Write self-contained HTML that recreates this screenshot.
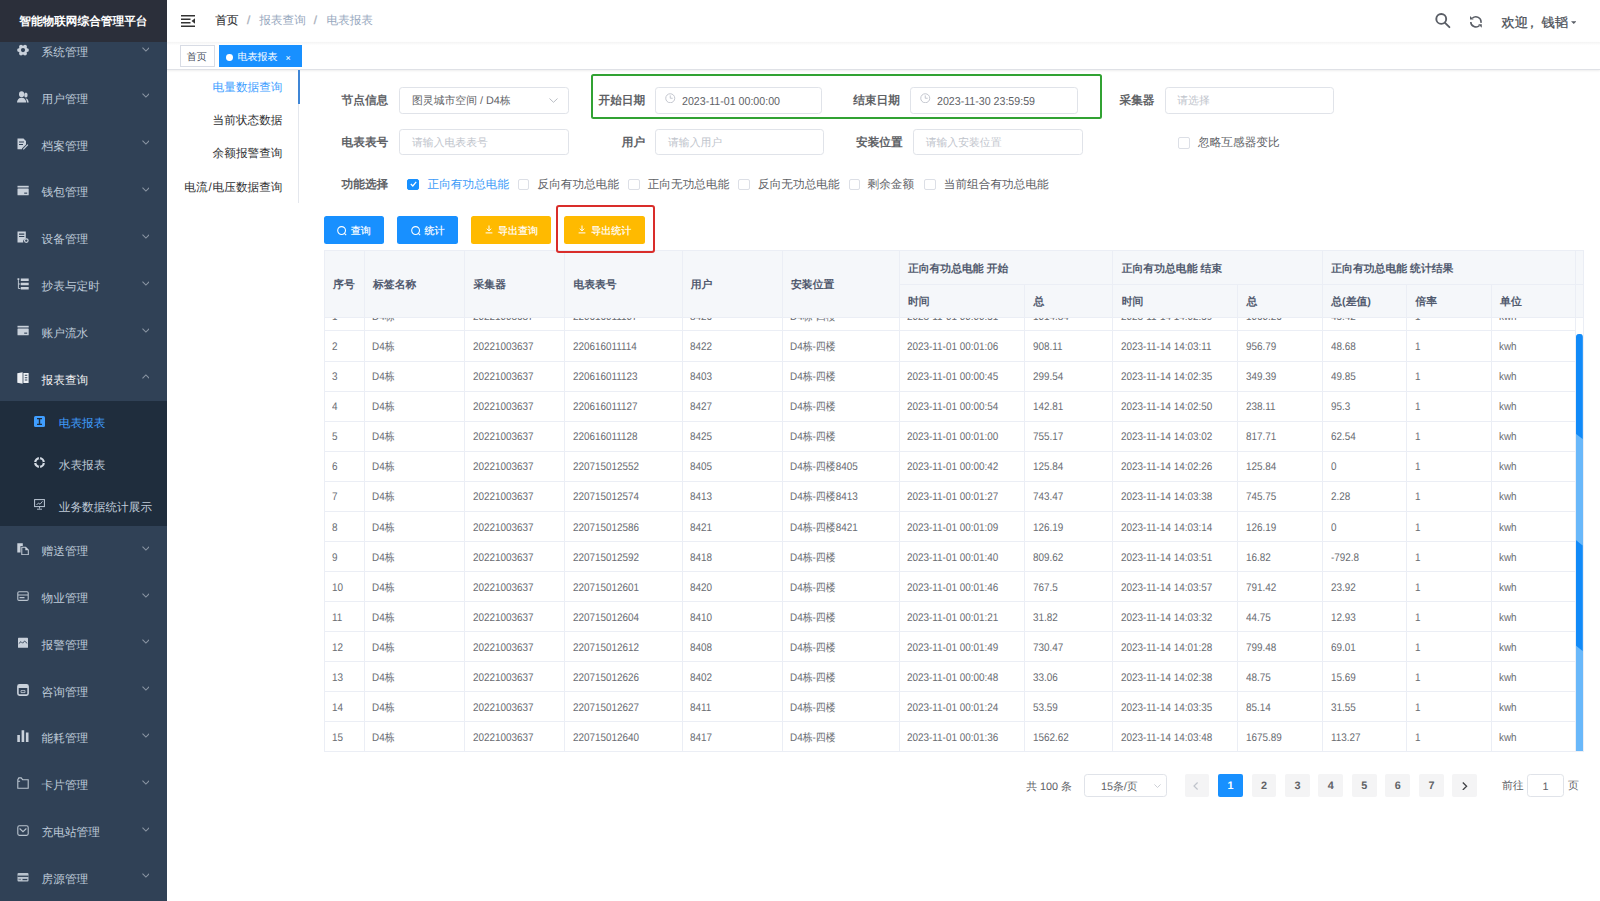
<!DOCTYPE html><html><head><meta charset="utf-8"><style>
*{box-sizing:border-box;margin:0;padding:0}
html,body{width:1600px;height:901px;overflow:hidden;background:#fff}
body{font-family:"Liberation Sans",sans-serif;color:#606266;position:relative;text-rendering:geometricPrecision}
.a{position:absolute;white-space:nowrap}
.sb{position:absolute;left:0;top:0;width:166.67px;height:901px;background:#304156;overflow:hidden}
.logo{position:absolute;left:0;top:0;width:166.67px;height:41.67px;background:#2b2f3a;color:#fff;font-weight:bold;font-size:11.67px;line-height:44.6px;text-align:center;z-index:2}
.mi{position:absolute;left:0;width:166.67px;height:46.67px;color:#bfcbd9;font-size:11.67px;line-height:46.67px}
.mi .t{position:absolute;left:41.6px;top:3.3px}
.mi svg.ic{position:absolute;left:16.5px;width:12px;height:12px}
.mi .ar{position:absolute;left:141.7px;width:7.8px;height:5px}
.sub{position:absolute;left:0;top:400.8px;width:166.67px;height:125px;background:#1f2d3d}
.si{position:absolute;left:0;width:166.67px;height:41.67px;line-height:41.67px;color:#bfcbd9;font-size:11.67px}
.si .t{position:absolute;left:58.8px;top:2.4px}
.si svg.ic{position:absolute;left:33.5px;width:11px;height:11px}
.nav{position:absolute;left:166.67px;top:0;width:1433.33px;height:41.67px;background:#fff}
.tags{position:absolute;left:166.67px;top:41.67px;width:1433.33px;height:28.33px;background:linear-gradient(#f4f4f4 0,#fbfbfb 2px,#fff 3.5px,#fff 100%);border-bottom:1px solid #dfe1e6;box-shadow:0 1px 2px 0 rgba(0,0,0,.07)}
.tag{position:absolute;top:3.7px;height:21.3px;line-height:20px;font-size:10px;border:1px solid #d8dce5;color:#495060;background:#fff}
.inp{position:absolute;height:26.2px;border:1px solid #e0e3e9;border-radius:3.3px;background:#fff;font-size:10.83px;line-height:24px;color:#606266}
.ph{color:#c0c4cc}
.lbl{position:absolute;font-size:11.67px;font-weight:bold;color:#606266;line-height:20px;text-align:right}
.cb{position:absolute;width:11.67px;height:11.67px;border:1px solid #dcdfe6;border-radius:2px;background:#fff}
.cbt{position:absolute;font-size:11.67px;color:#606266;line-height:14px;margin-top:0.8px}
.btn{position:absolute;top:216px;height:27.8px;border-radius:2.5px;color:#fff;font-size:10px;line-height:32px;-webkit-text-stroke:0.2px #fff}
.tbl{position:absolute;left:323.9px;top:250.3px;width:1258.9px;height:501.5px;overflow:hidden;border:1px solid #ebeef5;border-right:0}
.th{position:absolute;background:#f5f7fa;border-right:1px solid #ebeef5;border-bottom:1px solid #ebeef5;font-size:10.83px;font-weight:bold;color:#515a6e}
.th span{position:absolute;left:8.2px;top:50%;line-height:14px;margin-top:-6px}
.th.r1 span{margin-top:-5.3px}
.td{position:absolute;border-right:1px solid #ebeef5;border-bottom:1px solid #ebeef5;font-size:10px;color:#696c72;background:#fff}
.td span{position:absolute;left:7.5px;top:8.7px;line-height:14px;font-size:11px;transform:scaleX(0.9);transform-origin:0 0}
.pg{position:absolute;top:774.4px;height:22.9px;line-height:25.9px;font-size:10.83px;font-weight:bold;color:#606266;background:#f4f4f5;border-radius:2px;text-align:center;width:24.8px}
</style></head><body><div class="sb">
<div class="logo">智能物联网综合管理平台</div>
<div class="mi" style="top:26.70px;color:#bfcbd9"><svg class="ic" viewBox="0 0 12 12" style="top:17.40px"><circle cx="10.00" cy="6.10" r="1.9" fill="#c9d1db"/><circle cx="8.00" cy="9.56" r="1.9" fill="#c9d1db"/><circle cx="4.00" cy="9.56" r="1.9" fill="#c9d1db"/><circle cx="2.00" cy="6.10" r="1.9" fill="#c9d1db"/><circle cx="4.00" cy="2.64" r="1.9" fill="#c9d1db"/><circle cx="8.00" cy="2.64" r="1.9" fill="#c9d1db"/><circle cx="6" cy="6.1" r="4.3" fill="#c9d1db"/><circle cx="6" cy="6.1" r="2.1" fill="#304156"/></svg><span class="t">系统管理</span><svg class="ar" viewBox="0 0 8 5" style="top:19.9px"><path d="M0.5 0.6 L4 4.1 L7.5 0.6" fill="none" stroke="#8a95a3" stroke-width="1.1"/></svg></div>
<div class="mi" style="top:73.52px;color:#bfcbd9"><svg class="ic" viewBox="0 0 12 12" style="top:17.30px"><ellipse cx="4.6" cy="3.2" rx="2.6" ry="3" fill="#c9d1db"/><path fill="#c9d1db" d="M0 11.6c0-2.8 1.6-4.9 4.6-4.9s4.6 2.1 4.6 4.9z"/><ellipse cx="8.9" cy="4" rx="1.7" ry="2.5" fill="#c9d1db"/><path fill="#c9d1db" d="M8.6 7.3c1.9 0.3 2.9 1.9 3.1 4.3h-1.7c-0.1-1.6-0.6-3.1-1.4-4.3z"/></svg><span class="t">用户管理</span><svg class="ar" viewBox="0 0 8 5" style="top:19.9px"><path d="M0.5 0.6 L4 4.1 L7.5 0.6" fill="none" stroke="#8a95a3" stroke-width="1.1"/></svg></div>
<div class="mi" style="top:120.34px;color:#bfcbd9"><svg class="ic" viewBox="0 0 12 12" style="top:17.20px"><path fill="#c9d1db" d="M0.5 0.5h6l2.5 2.5v3.5L5 10.5v0.8H0.5z"/><path fill="#304156" d="M2 3.6h5v1H2zM2 6h4v1H2z"/><path stroke="#c9d1db" stroke-width="1.2" d="M6.3 11.3l4.6-4.6"/></svg><span class="t">档案管理</span><svg class="ar" viewBox="0 0 8 5" style="top:19.9px"><path d="M0.5 0.6 L4 4.1 L7.5 0.6" fill="none" stroke="#8a95a3" stroke-width="1.1"/></svg></div>
<div class="mi" style="top:167.16px;color:#bfcbd9"><svg class="ic" viewBox="0 0 12 12" style="top:17.40px"><rect x="0.5" y="0.8" width="11.2" height="1.7" fill="#c9d1db"/><rect x="0.5" y="3.6" width="11.2" height="6.6" rx="0.5" fill="#c9d1db"/><rect x="7.2" y="7.6" width="3" height="1.1" fill="#304156"/></svg><span class="t">钱包管理</span><svg class="ar" viewBox="0 0 8 5" style="top:19.9px"><path d="M0.5 0.6 L4 4.1 L7.5 0.6" fill="none" stroke="#8a95a3" stroke-width="1.1"/></svg></div>
<div class="mi" style="top:213.98px;color:#bfcbd9"><svg class="ic" viewBox="0 0 12 12" style="top:16.80px"><path fill="#c9d1db" d="M0.5 0.5h8.3v7.2a2.8 2.8 0 0 0-2.5 3.8H0.5z"/><path fill="#304156" d="M2 2.6h5.3v1.1H2zM2 5h5.3v1.1H2z"/><circle cx="9.3" cy="9.6" r="1.8" fill="none" stroke="#c9d1db" stroke-width="1.2"/></svg><span class="t">设备管理</span><svg class="ar" viewBox="0 0 8 5" style="top:19.9px"><path d="M0.5 0.6 L4 4.1 L7.5 0.6" fill="none" stroke="#8a95a3" stroke-width="1.1"/></svg></div>
<div class="mi" style="top:260.80px;color:#bfcbd9"><svg class="ic" viewBox="0 0 12 12" style="top:16.90px"><path fill="#c9d1db" d="M0.5 0.3h1.8v1.8H0.5zM3.8 0.5h7.9v2.4H3.8zM3.8 4.8h7.9v2.4H3.8zM3.8 9h7.9v2.4H3.8z"/><path fill="none" stroke="#c9d1db" stroke-width="0.9" d="M1.4 2.1v8.4h2M1.4 6h2"/></svg><span class="t">抄表与定时</span><svg class="ar" viewBox="0 0 8 5" style="top:19.9px"><path d="M0.5 0.6 L4 4.1 L7.5 0.6" fill="none" stroke="#8a95a3" stroke-width="1.1"/></svg></div>
<div class="mi" style="top:307.62px;color:#bfcbd9"><svg class="ic" viewBox="0 0 12 12" style="top:17.40px"><rect x="0.5" y="0.8" width="11.2" height="1.7" fill="#c9d1db"/><rect x="0.5" y="3.6" width="11.2" height="6.6" rx="0.5" fill="#c9d1db"/><rect x="7.2" y="7.6" width="3" height="1.1" fill="#304156"/></svg><span class="t">账户流水</span><svg class="ar" viewBox="0 0 8 5" style="top:19.9px"><path d="M0.5 0.6 L4 4.1 L7.5 0.6" fill="none" stroke="#8a95a3" stroke-width="1.1"/></svg></div>
<div class="mi" style="top:354.44px;color:#f4f4f5"><svg class="ic" viewBox="0 0 12 12" style="top:17.40px"><path fill="#edf0f4" d="M0.3 1.2L5.6 0.2v11.5L0.3 10.8z"/><path fill="#edf0f4" d="M6.4 1h5.2v10H6.4z"/><path fill="#304156" d="M7.8 2.8h2.5v1H7.8zM7.8 5.2h2.5v1H7.8zM7.8 7.6h2.5v1H7.8z"/></svg><span class="t">报表查询</span><svg class="ar" viewBox="0 0 8 5" style="top:19.9px"><path d="M0.5 4.4 L4 0.9 L7.5 4.4" fill="none" stroke="#8a95a3" stroke-width="1.1"/></svg></div>
<div class="sub">
<div class="si" style="top:0.00px;color:#409eff"><svg class="ic" viewBox="0 0 11 11" style="top:15px"><rect x="0" y="0" width="11" height="11" rx="1.5" fill="#409eff"/><path fill="#1f2d3d" d="M3 2h5v1.3H6.2v4.4H8V9H3V7.7h1.8V3.3H3z"/></svg><span class="t">电表报表</span></div>
<div class="si" style="top:41.67px;color:#bfcbd9"><svg class="ic" viewBox="0 0 11 11" style="top:15px"><circle cx="5.5" cy="5.5" r="4.3" fill="none" stroke="#d5dce5" stroke-width="2.2"/><path stroke="#1f2d3d" stroke-width="1.2" d="M5.5 0v2.5M5.5 8.5V11M0 5.5h2.5M8.5 5.5H11"/></svg><span class="t">水表报表</span></div>
<div class="si" style="top:83.33px;color:#bfcbd9"><svg class="ic" viewBox="0 0 11 11" style="top:15px"><rect x="0.6" y="0.6" width="9.8" height="7" fill="none" stroke="#bfcbd9" stroke-width="1"/><path fill="none" stroke="#bfcbd9" stroke-width="0.9" d="M2.5 6l2-2 1.5 1.3 2.5-3M5.5 7.6v2M3 10.2h5"/></svg><span class="t">业务数据统计展示</span></div>
</div>
<div class="mi" style="top:525.80px"><svg class="ic" viewBox="0 0 12 12" style="top:16.90px"><path fill="#c9d1db" d="M0.3 0.3h5.5v2.8H3.5v6.5H0.3z"/><path fill="#c9d1db" d="M4.3 3.8h4.5l3 3v5.5H4.3z"/><path fill="#304156" d="M5.3 4.8h3v2.5h2.5v4H5.3z"/><path fill="#c9d1db" d="M6 6h1.6v2.3h2.4v2.2H6z" opacity="0.0"/></svg><span class="t">赠送管理</span><svg class="ar" viewBox="0 0 8 5" style="top:19.9px"><path d="M0.5 0.6 L4 4.1 L7.5 0.6" fill="none" stroke="#8a95a3" stroke-width="1.1"/></svg></div>
<div class="mi" style="top:572.62px"><svg class="ic" viewBox="0 0 12 12" style="top:18.60px"><rect x="0.8" y="0.8" width="10.4" height="8.6" rx="1.2" fill="none" stroke="#b9c3ce" stroke-width="1.1"/><path stroke="#b9c3ce" stroke-width="1.1" d="M1 4h10M2.5 6.6h5"/></svg><span class="t">物业管理</span><svg class="ar" viewBox="0 0 8 5" style="top:19.9px"><path d="M0.5 0.6 L4 4.1 L7.5 0.6" fill="none" stroke="#8a95a3" stroke-width="1.1"/></svg></div>
<div class="mi" style="top:619.44px"><svg class="ic" viewBox="0 0 12 12" style="top:17.50px"><rect x="1" y="0.8" width="10" height="10" rx="0.6" fill="#c9d1db"/><path fill="none" stroke="#304156" stroke-width="0.9" d="M1.8 6.6l2.2-2 1.6 1.6 2-2.2 2.6 2.4"/></svg><span class="t">报警管理</span><svg class="ar" viewBox="0 0 8 5" style="top:19.9px"><path d="M0.5 0.6 L4 4.1 L7.5 0.6" fill="none" stroke="#8a95a3" stroke-width="1.1"/></svg></div>
<div class="mi" style="top:666.26px"><svg class="ic" viewBox="0 0 12 12" style="top:17.30px"><rect x="0.9" y="0.9" width="10.2" height="10.2" rx="1.6" fill="none" stroke="#c9d1db" stroke-width="1.6"/><rect x="1" y="1" width="10" height="3" fill="#c9d1db"/><path fill="none" stroke="#c9d1db" stroke-width="0.8" d="M4 6.6h4v2H4z"/></svg><span class="t">咨询管理</span><svg class="ar" viewBox="0 0 8 5" style="top:19.9px"><path d="M0.5 0.6 L4 4.1 L7.5 0.6" fill="none" stroke="#8a95a3" stroke-width="1.1"/></svg></div>
<div class="mi" style="top:713.08px"><svg class="ic" viewBox="0 0 12 12" style="top:16.90px"><path fill="#c9d1db" d="M0.3 5h2.6v7H0.3zM4.6 0.3h2.6V12H4.6zM8.9 2.5h2.6V12H8.9z"/></svg><span class="t">能耗管理</span><svg class="ar" viewBox="0 0 8 5" style="top:19.9px"><path d="M0.5 0.6 L4 4.1 L7.5 0.6" fill="none" stroke="#8a95a3" stroke-width="1.1"/></svg></div>
<div class="mi" style="top:759.90px"><svg class="ic" viewBox="0 0 12 12" style="top:17.40px"><path fill="none" stroke="#b9c3ce" stroke-width="1.1" d="M0.8 2.7v8.5h10.4V2.7H5.6L4.2 0.9H1.8zM0.8 4.2h2.3"/></svg><span class="t">卡片管理</span><svg class="ar" viewBox="0 0 8 5" style="top:19.9px"><path d="M0.5 0.6 L4 4.1 L7.5 0.6" fill="none" stroke="#8a95a3" stroke-width="1.1"/></svg></div>
<div class="mi" style="top:806.72px"><svg class="ic" viewBox="0 0 12 12" style="top:17.80px"><rect x="0.8" y="0.8" width="10.4" height="9.6" rx="1.6" fill="none" stroke="#b9c3ce" stroke-width="1.1"/><path fill="none" stroke="#b9c3ce" stroke-width="1.1" d="M2.6 3.5l3.4 3.2 3.4-3.2"/></svg><span class="t">充电站管理</span><svg class="ar" viewBox="0 0 8 5" style="top:19.9px"><path d="M0.5 0.6 L4 4.1 L7.5 0.6" fill="none" stroke="#8a95a3" stroke-width="1.1"/></svg></div>
<div class="mi" style="top:853.54px"><svg class="ic" viewBox="0 0 12 12" style="top:18.30px"><rect x="0.5" y="1" width="11" height="8.5" rx="1" fill="#b9c3ce"/><rect x="0.5" y="3.6" width="11" height="1.3" fill="#304156"/><rect x="5.5" y="6.9" width="4.8" height="1.3" fill="#304156"/><rect x="1.5" y="6.9" width="2.5" height="0.6" fill="#304156"/></svg><span class="t">房源管理</span><svg class="ar" viewBox="0 0 8 5" style="top:19.9px"><path d="M0.5 0.6 L4 4.1 L7.5 0.6" fill="none" stroke="#8a95a3" stroke-width="1.1"/></svg></div>
</div>
<div class="nav"></div>
<svg class="a" style="left:181px;top:15px;width:14px;height:12px" viewBox="0 0 14 12"><path fill="#333" d="M0 0h14v1.4H0zM0 3.5h9.5v1.4H0zM0 7h9.5v1.4H0zM0 10.6h14V12H0z"/><path fill="#333" d="M14 3.3v5.4L10.5 6z"/></svg>
<span class="a" style="left:215.2px;top:14.2px;font-size:11.67px;line-height:14px;color:#303133;-webkit-text-stroke:0.15px #303133">首页</span>
<span class="a" style="left:247px;top:14.4px;font-size:11.67px;line-height:14px;color:#a9b0bb;-webkit-text-stroke:0.3px #a9b0bb">/</span>
<span class="a" style="left:259.2px;top:14.2px;font-size:11.67px;line-height:14px;color:#97a8be">报表查询</span>
<span class="a" style="left:313.7px;top:14.4px;font-size:11.67px;line-height:14px;color:#a9b0bb;-webkit-text-stroke:0.3px #a9b0bb">/</span>
<span class="a" style="left:326.4px;top:14.2px;font-size:11.67px;line-height:14px;color:#97a8be">电表报表</span>
<svg class="a" style="left:1434px;top:12px;width:17px;height:17px" viewBox="0 0 17 17"><circle cx="7.25" cy="6.9" r="4.95" fill="none" stroke="#5a5e66" stroke-width="1.9"/><path stroke="#5a5e66" stroke-width="1.9" stroke-linecap="round" d="M10.8 10.6l4.6 4.6"/></svg>
<svg class="a" style="left:1469px;top:15px;width:14px;height:14px" viewBox="0 0 14 14"><path fill="none" stroke="#5a5e66" stroke-width="1.6" d="M3.3 3.3A5.1 5.1 0 0 1 11.92 7.79M1.8 6.9A5.1 5.1 0 0 0 10.5 10.5"/><path fill="#5a5e66" d="M1 1L1 4.6L4.6 4.6ZM9.2 9.2L12.8 9.2L12.8 12.8Z"/></svg>
<span class="a" style="left:1501.5px;top:15px;font-size:13.33px;line-height:16px;color:#4a4e56;-webkit-text-stroke:0.25px #4a4e56">欢迎<span style="margin-left:-3px;margin-right:3px">，</span>钱韬</span>
<svg class="a" style="left:1570.5px;top:21px;width:5.5px;height:3px" viewBox="0 0 6 3"><path fill="#5a5e66" d="M0 0h6L3 3z"/></svg>
<div class="tags"></div>
<div class="tag" style="left:180px;top:45.3px;width:34.7px;padding-left:5.8px;line-height:23.6px">首页</div>
<div class="tag" style="left:219px;top:45.3px;width:82.5px;background:#1890ff;border-color:#1890ff;color:#fff;padding-left:17.5px;line-height:24px">电表报表<span style="position:absolute;left:6.2px;top:7.9px;width:6.8px;height:6.8px;border-radius:50%;background:#fff"></span><span style="position:absolute;left:65.5px;top:0.7px;font-size:9px;line-height:23px">×</span></div>
<div class="a" style="left:297.5px;top:70px;width:1.5px;height:133.3px;background:#e4e7ed"></div>
<div class="a" style="left:297.6px;top:69.8px;width:2px;height:33.8px;background:#3f86d6"></div>
<div class="a" style="right:1317.50px;top:79.70px;font-size:11.67px;line-height:16px;color:#409eff">电量数据查询</div>
<div class="a" style="right:1317.50px;top:113.03px;font-size:11.67px;line-height:16px;color:#303133">当前状态数据</div>
<div class="a" style="right:1317.50px;top:146.36px;font-size:11.67px;line-height:16px;color:#303133">余额报警查询</div>
<div class="a" style="right:1317.50px;top:179.69px;font-size:11.67px;line-height:16px;color:#303133">电流<span style="margin:0 0.9px">/</span>电压数据查询</div>
<div class="lbl" style="right:1211.80px;top:91.40px">节点信息</div>
<div class="inp" style="left:399.40px;top:87.30px;width:169.40px;height:26.30px"><span class="a " style="left:11.6px;top:1px">图灵城市空间 / D4栋</span></div>
<svg class="a" style="left:549px;top:97.5px;width:9px;height:5px" viewBox="0 0 9 5"><path d="M0.5 0.5L4.5 4.3 8.5 0.5" fill="none" stroke="#b8bcc4" stroke-width="1"/></svg>
<div class="a" style="left:590.6px;top:74.3px;width:511.4px;height:45px;border:2.5px solid #31a233;border-radius:2.5px"></div>
<div class="lbl" style="right:954.90px;top:91.10px">开始日期</div>
<div class="inp" style="left:655.40px;top:87.00px;width:166.80px;height:26.50px"><span class="a " style="left:25.5px;top:1px"><span style="display:inline-block;font-size:11.5px;transform:scaleX(0.925);transform-origin:0 50%;margin-left:0.2px;position:relative;top:0.8px">2023-11-01 00:00:00</span></span><svg class="a" style="left:8.8px;top:4.6px;width:10.5px;height:10.5px" viewBox="0 0 10 10"><circle cx="5" cy="5" r="4.3" fill="none" stroke="#c0c4cc" stroke-width="0.9"/><path d="M5 2.3V5h2.3" fill="none" stroke="#c0c4cc" stroke-width="0.9"/></svg></div>
<div class="lbl" style="right:700.20px;top:91.10px">结束日期</div>
<div class="inp" style="left:910.40px;top:87.00px;width:167.20px;height:26.50px"><span class="a " style="left:25.5px;top:1px"><span style="display:inline-block;font-size:11.5px;transform:scaleX(0.925);transform-origin:0 50%;margin-left:0.2px;position:relative;top:0.8px">2023-11-30 23:59:59</span></span><svg class="a" style="left:8.8px;top:4.6px;width:10.5px;height:10.5px" viewBox="0 0 10 10"><circle cx="5" cy="5" r="4.3" fill="none" stroke="#c0c4cc" stroke-width="0.9"/><path d="M5 2.3V5h2.3" fill="none" stroke="#c0c4cc" stroke-width="0.9"/></svg></div>
<div class="lbl" style="right:445.50px;top:91.10px">采集器</div>
<div class="inp" style="left:1164.70px;top:87.00px;width:169.00px;height:26.50px"><span class="a ph" style="left:11.6px;top:1px">请选择</span></div>
<div class="lbl" style="right:1211.80px;top:132.80px">电表表号</div>
<div class="inp" style="left:399.40px;top:128.70px;width:169.40px;height:26.30px"><span class="a ph" style="left:11.6px;top:1px">请输入电表表号</span></div>
<div class="lbl" style="right:954.90px;top:132.80px">用户</div>
<div class="inp" style="left:655.40px;top:128.80px;width:169.00px;height:26.20px"><span class="a ph" style="left:11.6px;top:1px">请输入用户</span></div>
<div class="lbl" style="right:697.40px;top:132.80px">安装位置</div>
<div class="inp" style="left:913.10px;top:128.80px;width:169.50px;height:26.20px"><span class="a ph" style="left:11.6px;top:1px">请输入安装位置</span></div>
<div class="cb" style="left:1178px;top:137.1px"></div>
<div class="cbt" style="left:1198px;top:135.5px">忽略互感器变比</div>
<div class="lbl" style="right:1211.80px;top:175.10px">功能选择</div>
<div class="cb" style="left:407.2px;top:178.6px;background:#1890ff;border-color:#1890ff"><svg style="position:absolute;left:1.5px;top:1.8px;width:7px;height:6px" viewBox="0 0 7 6"><path d="M0.8 3l2 2L6.2 0.8" fill="none" stroke="#fff" stroke-width="1.2"/></svg></div>
<div class="cbt" style="left:427.5px;top:177px;color:#3d9bf8">正向有功总电能</div>
<div class="cb" style="left:517.5px;top:178.6px"></div>
<div class="cbt" style="left:537.5px;top:177px">反向有功总电能</div>
<div class="cb" style="left:628px;top:178.6px"></div>
<div class="cbt" style="left:647.7px;top:177px">正向无功总电能</div>
<div class="cb" style="left:738.4px;top:178.6px"></div>
<div class="cbt" style="left:758px;top:177px">反向无功总电能</div>
<div class="cb" style="left:848.6px;top:178.6px"></div>
<div class="cbt" style="left:867.5px;top:177px">剩余金额</div>
<div class="cb" style="left:924.2px;top:178.6px"></div>
<div class="cbt" style="left:943.8px;top:177px">当前组合有功总电能</div>
<div class="btn" style="left:323.5px;width:60.7px;background:#1890ff"><svg style="position:absolute;left:13.5px;top:9.8px;width:10px;height:10px" viewBox="0 0 10 10"><circle cx="4.6" cy="4.5" r="3.9" fill="none" stroke="#fff" stroke-width="1.05"/><path d="M7.4 7.3L9.2 9.1" stroke="#fff" stroke-width="1.1"/></svg><span class="a" style="left:27.3px;top:0">查询</span></div>
<div class="btn" style="left:397.2px;width:60.6px;background:#1890ff"><svg style="position:absolute;left:13.5px;top:9.8px;width:10px;height:10px" viewBox="0 0 10 10"><circle cx="4.6" cy="4.5" r="3.9" fill="none" stroke="#fff" stroke-width="1.05"/><path d="M7.4 7.3L9.2 9.1" stroke="#fff" stroke-width="1.1"/></svg><span class="a" style="left:27.3px;top:0">统计</span></div>
<div class="btn" style="left:470.9px;width:80.6px;background:#ffba00"><svg style="position:absolute;left:14px;top:9.1px;width:8px;height:8.5px" viewBox="0 0 8 8.5"><path d="M4 0.5v5.3M1.8 3.7L4 5.9 6.2 3.7M0.6 7.9h6.8" fill="none" stroke="#fff" stroke-width="1"/></svg><span class="a" style="left:27px;top:0">导出查询</span></div>
<div class="btn" style="left:564.3px;width:80.7px;background:#ffba00"><svg style="position:absolute;left:14px;top:9.1px;width:8px;height:8.5px" viewBox="0 0 8 8.5"><path d="M4 0.5v5.3M1.8 3.7L4 5.9 6.2 3.7M0.6 7.9h6.8" fill="none" stroke="#fff" stroke-width="1"/></svg><span class="a" style="left:27px;top:0">导出统计</span></div>
<div class="a" style="left:323.9px;top:250.3px;width:1258.90px;height:501.50px;border:1px solid #ebeef5;border-right:0;overflow:hidden;background:#fff">
<div class="td" style="left:0.00px;top:50.14px;width:39.90px;height:30.06px"><span>1</span></div>
<div class="td" style="left:39.90px;top:50.14px;width:100.50px;height:30.06px"><span>D4栋</span></div>
<div class="td" style="left:140.40px;top:50.14px;width:99.90px;height:30.06px"><span>20221003637</span></div>
<div class="td" style="left:240.30px;top:50.14px;width:117.40px;height:30.06px"><span>220616011107</span></div>
<div class="td" style="left:357.70px;top:50.14px;width:100.20px;height:30.06px"><span>8426</span></div>
<div class="td" style="left:457.90px;top:50.14px;width:116.90px;height:30.06px"><span>D4栋-四楼</span></div>
<div class="td" style="left:574.80px;top:50.14px;width:125.70px;height:30.06px"><span>2023-11-01 00:00:51</span></div>
<div class="td" style="left:700.50px;top:50.14px;width:88.10px;height:30.06px"><span>1014.84</span></div>
<div class="td" style="left:788.60px;top:50.14px;width:124.70px;height:30.06px"><span>2023-11-14 14:02:59</span></div>
<div class="td" style="left:913.30px;top:50.14px;width:84.90px;height:30.06px"><span>1060.26</span></div>
<div class="td" style="left:998.20px;top:50.14px;width:84.20px;height:30.06px"><span>45.42</span></div>
<div class="td" style="left:1082.40px;top:50.14px;width:84.60px;height:30.06px"><span>1</span></div>
<div class="td" style="left:1167.00px;top:50.14px;width:84.40px;height:30.06px"><span>kwh</span></div>
<div class="td" style="left:0.00px;top:80.20px;width:39.90px;height:30.06px"><span>2</span></div>
<div class="td" style="left:39.90px;top:80.20px;width:100.50px;height:30.06px"><span>D4栋</span></div>
<div class="td" style="left:140.40px;top:80.20px;width:99.90px;height:30.06px"><span>20221003637</span></div>
<div class="td" style="left:240.30px;top:80.20px;width:117.40px;height:30.06px"><span>220616011114</span></div>
<div class="td" style="left:357.70px;top:80.20px;width:100.20px;height:30.06px"><span>8422</span></div>
<div class="td" style="left:457.90px;top:80.20px;width:116.90px;height:30.06px"><span>D4栋-四楼</span></div>
<div class="td" style="left:574.80px;top:80.20px;width:125.70px;height:30.06px"><span>2023-11-01 00:01:06</span></div>
<div class="td" style="left:700.50px;top:80.20px;width:88.10px;height:30.06px"><span>908.11</span></div>
<div class="td" style="left:788.60px;top:80.20px;width:124.70px;height:30.06px"><span>2023-11-14 14:03:11</span></div>
<div class="td" style="left:913.30px;top:80.20px;width:84.90px;height:30.06px"><span>956.79</span></div>
<div class="td" style="left:998.20px;top:80.20px;width:84.20px;height:30.06px"><span>48.68</span></div>
<div class="td" style="left:1082.40px;top:80.20px;width:84.60px;height:30.06px"><span>1</span></div>
<div class="td" style="left:1167.00px;top:80.20px;width:84.40px;height:30.06px"><span>kwh</span></div>
<div class="td" style="left:0.00px;top:110.26px;width:39.90px;height:30.06px"><span>3</span></div>
<div class="td" style="left:39.90px;top:110.26px;width:100.50px;height:30.06px"><span>D4栋</span></div>
<div class="td" style="left:140.40px;top:110.26px;width:99.90px;height:30.06px"><span>20221003637</span></div>
<div class="td" style="left:240.30px;top:110.26px;width:117.40px;height:30.06px"><span>220616011123</span></div>
<div class="td" style="left:357.70px;top:110.26px;width:100.20px;height:30.06px"><span>8403</span></div>
<div class="td" style="left:457.90px;top:110.26px;width:116.90px;height:30.06px"><span>D4栋-四楼</span></div>
<div class="td" style="left:574.80px;top:110.26px;width:125.70px;height:30.06px"><span>2023-11-01 00:00:45</span></div>
<div class="td" style="left:700.50px;top:110.26px;width:88.10px;height:30.06px"><span>299.54</span></div>
<div class="td" style="left:788.60px;top:110.26px;width:124.70px;height:30.06px"><span>2023-11-14 14:02:35</span></div>
<div class="td" style="left:913.30px;top:110.26px;width:84.90px;height:30.06px"><span>349.39</span></div>
<div class="td" style="left:998.20px;top:110.26px;width:84.20px;height:30.06px"><span>49.85</span></div>
<div class="td" style="left:1082.40px;top:110.26px;width:84.60px;height:30.06px"><span>1</span></div>
<div class="td" style="left:1167.00px;top:110.26px;width:84.40px;height:30.06px"><span>kwh</span></div>
<div class="td" style="left:0.00px;top:140.32px;width:39.90px;height:30.06px"><span>4</span></div>
<div class="td" style="left:39.90px;top:140.32px;width:100.50px;height:30.06px"><span>D4栋</span></div>
<div class="td" style="left:140.40px;top:140.32px;width:99.90px;height:30.06px"><span>20221003637</span></div>
<div class="td" style="left:240.30px;top:140.32px;width:117.40px;height:30.06px"><span>220616011127</span></div>
<div class="td" style="left:357.70px;top:140.32px;width:100.20px;height:30.06px"><span>8427</span></div>
<div class="td" style="left:457.90px;top:140.32px;width:116.90px;height:30.06px"><span>D4栋-四楼</span></div>
<div class="td" style="left:574.80px;top:140.32px;width:125.70px;height:30.06px"><span>2023-11-01 00:00:54</span></div>
<div class="td" style="left:700.50px;top:140.32px;width:88.10px;height:30.06px"><span>142.81</span></div>
<div class="td" style="left:788.60px;top:140.32px;width:124.70px;height:30.06px"><span>2023-11-14 14:02:50</span></div>
<div class="td" style="left:913.30px;top:140.32px;width:84.90px;height:30.06px"><span>238.11</span></div>
<div class="td" style="left:998.20px;top:140.32px;width:84.20px;height:30.06px"><span>95.3</span></div>
<div class="td" style="left:1082.40px;top:140.32px;width:84.60px;height:30.06px"><span>1</span></div>
<div class="td" style="left:1167.00px;top:140.32px;width:84.40px;height:30.06px"><span>kwh</span></div>
<div class="td" style="left:0.00px;top:170.38px;width:39.90px;height:30.06px"><span>5</span></div>
<div class="td" style="left:39.90px;top:170.38px;width:100.50px;height:30.06px"><span>D4栋</span></div>
<div class="td" style="left:140.40px;top:170.38px;width:99.90px;height:30.06px"><span>20221003637</span></div>
<div class="td" style="left:240.30px;top:170.38px;width:117.40px;height:30.06px"><span>220616011128</span></div>
<div class="td" style="left:357.70px;top:170.38px;width:100.20px;height:30.06px"><span>8425</span></div>
<div class="td" style="left:457.90px;top:170.38px;width:116.90px;height:30.06px"><span>D4栋-四楼</span></div>
<div class="td" style="left:574.80px;top:170.38px;width:125.70px;height:30.06px"><span>2023-11-01 00:01:00</span></div>
<div class="td" style="left:700.50px;top:170.38px;width:88.10px;height:30.06px"><span>755.17</span></div>
<div class="td" style="left:788.60px;top:170.38px;width:124.70px;height:30.06px"><span>2023-11-14 14:03:02</span></div>
<div class="td" style="left:913.30px;top:170.38px;width:84.90px;height:30.06px"><span>817.71</span></div>
<div class="td" style="left:998.20px;top:170.38px;width:84.20px;height:30.06px"><span>62.54</span></div>
<div class="td" style="left:1082.40px;top:170.38px;width:84.60px;height:30.06px"><span>1</span></div>
<div class="td" style="left:1167.00px;top:170.38px;width:84.40px;height:30.06px"><span>kwh</span></div>
<div class="td" style="left:0.00px;top:200.44px;width:39.90px;height:30.06px"><span>6</span></div>
<div class="td" style="left:39.90px;top:200.44px;width:100.50px;height:30.06px"><span>D4栋</span></div>
<div class="td" style="left:140.40px;top:200.44px;width:99.90px;height:30.06px"><span>20221003637</span></div>
<div class="td" style="left:240.30px;top:200.44px;width:117.40px;height:30.06px"><span>220715012552</span></div>
<div class="td" style="left:357.70px;top:200.44px;width:100.20px;height:30.06px"><span>8405</span></div>
<div class="td" style="left:457.90px;top:200.44px;width:116.90px;height:30.06px"><span>D4栋-四楼8405</span></div>
<div class="td" style="left:574.80px;top:200.44px;width:125.70px;height:30.06px"><span>2023-11-01 00:00:42</span></div>
<div class="td" style="left:700.50px;top:200.44px;width:88.10px;height:30.06px"><span>125.84</span></div>
<div class="td" style="left:788.60px;top:200.44px;width:124.70px;height:30.06px"><span>2023-11-14 14:02:26</span></div>
<div class="td" style="left:913.30px;top:200.44px;width:84.90px;height:30.06px"><span>125.84</span></div>
<div class="td" style="left:998.20px;top:200.44px;width:84.20px;height:30.06px"><span>0</span></div>
<div class="td" style="left:1082.40px;top:200.44px;width:84.60px;height:30.06px"><span>1</span></div>
<div class="td" style="left:1167.00px;top:200.44px;width:84.40px;height:30.06px"><span>kwh</span></div>
<div class="td" style="left:0.00px;top:230.50px;width:39.90px;height:30.06px"><span>7</span></div>
<div class="td" style="left:39.90px;top:230.50px;width:100.50px;height:30.06px"><span>D4栋</span></div>
<div class="td" style="left:140.40px;top:230.50px;width:99.90px;height:30.06px"><span>20221003637</span></div>
<div class="td" style="left:240.30px;top:230.50px;width:117.40px;height:30.06px"><span>220715012574</span></div>
<div class="td" style="left:357.70px;top:230.50px;width:100.20px;height:30.06px"><span>8413</span></div>
<div class="td" style="left:457.90px;top:230.50px;width:116.90px;height:30.06px"><span>D4栋-四楼8413</span></div>
<div class="td" style="left:574.80px;top:230.50px;width:125.70px;height:30.06px"><span>2023-11-01 00:01:27</span></div>
<div class="td" style="left:700.50px;top:230.50px;width:88.10px;height:30.06px"><span>743.47</span></div>
<div class="td" style="left:788.60px;top:230.50px;width:124.70px;height:30.06px"><span>2023-11-14 14:03:38</span></div>
<div class="td" style="left:913.30px;top:230.50px;width:84.90px;height:30.06px"><span>745.75</span></div>
<div class="td" style="left:998.20px;top:230.50px;width:84.20px;height:30.06px"><span>2.28</span></div>
<div class="td" style="left:1082.40px;top:230.50px;width:84.60px;height:30.06px"><span>1</span></div>
<div class="td" style="left:1167.00px;top:230.50px;width:84.40px;height:30.06px"><span>kwh</span></div>
<div class="td" style="left:0.00px;top:260.56px;width:39.90px;height:30.06px"><span>8</span></div>
<div class="td" style="left:39.90px;top:260.56px;width:100.50px;height:30.06px"><span>D4栋</span></div>
<div class="td" style="left:140.40px;top:260.56px;width:99.90px;height:30.06px"><span>20221003637</span></div>
<div class="td" style="left:240.30px;top:260.56px;width:117.40px;height:30.06px"><span>220715012586</span></div>
<div class="td" style="left:357.70px;top:260.56px;width:100.20px;height:30.06px"><span>8421</span></div>
<div class="td" style="left:457.90px;top:260.56px;width:116.90px;height:30.06px"><span>D4栋-四楼8421</span></div>
<div class="td" style="left:574.80px;top:260.56px;width:125.70px;height:30.06px"><span>2023-11-01 00:01:09</span></div>
<div class="td" style="left:700.50px;top:260.56px;width:88.10px;height:30.06px"><span>126.19</span></div>
<div class="td" style="left:788.60px;top:260.56px;width:124.70px;height:30.06px"><span>2023-11-14 14:03:14</span></div>
<div class="td" style="left:913.30px;top:260.56px;width:84.90px;height:30.06px"><span>126.19</span></div>
<div class="td" style="left:998.20px;top:260.56px;width:84.20px;height:30.06px"><span>0</span></div>
<div class="td" style="left:1082.40px;top:260.56px;width:84.60px;height:30.06px"><span>1</span></div>
<div class="td" style="left:1167.00px;top:260.56px;width:84.40px;height:30.06px"><span>kwh</span></div>
<div class="td" style="left:0.00px;top:290.62px;width:39.90px;height:30.06px"><span>9</span></div>
<div class="td" style="left:39.90px;top:290.62px;width:100.50px;height:30.06px"><span>D4栋</span></div>
<div class="td" style="left:140.40px;top:290.62px;width:99.90px;height:30.06px"><span>20221003637</span></div>
<div class="td" style="left:240.30px;top:290.62px;width:117.40px;height:30.06px"><span>220715012592</span></div>
<div class="td" style="left:357.70px;top:290.62px;width:100.20px;height:30.06px"><span>8418</span></div>
<div class="td" style="left:457.90px;top:290.62px;width:116.90px;height:30.06px"><span>D4栋-四楼</span></div>
<div class="td" style="left:574.80px;top:290.62px;width:125.70px;height:30.06px"><span>2023-11-01 00:01:40</span></div>
<div class="td" style="left:700.50px;top:290.62px;width:88.10px;height:30.06px"><span>809.62</span></div>
<div class="td" style="left:788.60px;top:290.62px;width:124.70px;height:30.06px"><span>2023-11-14 14:03:51</span></div>
<div class="td" style="left:913.30px;top:290.62px;width:84.90px;height:30.06px"><span>16.82</span></div>
<div class="td" style="left:998.20px;top:290.62px;width:84.20px;height:30.06px"><span>-792.8</span></div>
<div class="td" style="left:1082.40px;top:290.62px;width:84.60px;height:30.06px"><span>1</span></div>
<div class="td" style="left:1167.00px;top:290.62px;width:84.40px;height:30.06px"><span>kwh</span></div>
<div class="td" style="left:0.00px;top:320.68px;width:39.90px;height:30.06px"><span>10</span></div>
<div class="td" style="left:39.90px;top:320.68px;width:100.50px;height:30.06px"><span>D4栋</span></div>
<div class="td" style="left:140.40px;top:320.68px;width:99.90px;height:30.06px"><span>20221003637</span></div>
<div class="td" style="left:240.30px;top:320.68px;width:117.40px;height:30.06px"><span>220715012601</span></div>
<div class="td" style="left:357.70px;top:320.68px;width:100.20px;height:30.06px"><span>8420</span></div>
<div class="td" style="left:457.90px;top:320.68px;width:116.90px;height:30.06px"><span>D4栋-四楼</span></div>
<div class="td" style="left:574.80px;top:320.68px;width:125.70px;height:30.06px"><span>2023-11-01 00:01:46</span></div>
<div class="td" style="left:700.50px;top:320.68px;width:88.10px;height:30.06px"><span>767.5</span></div>
<div class="td" style="left:788.60px;top:320.68px;width:124.70px;height:30.06px"><span>2023-11-14 14:03:57</span></div>
<div class="td" style="left:913.30px;top:320.68px;width:84.90px;height:30.06px"><span>791.42</span></div>
<div class="td" style="left:998.20px;top:320.68px;width:84.20px;height:30.06px"><span>23.92</span></div>
<div class="td" style="left:1082.40px;top:320.68px;width:84.60px;height:30.06px"><span>1</span></div>
<div class="td" style="left:1167.00px;top:320.68px;width:84.40px;height:30.06px"><span>kwh</span></div>
<div class="td" style="left:0.00px;top:350.74px;width:39.90px;height:30.06px"><span>11</span></div>
<div class="td" style="left:39.90px;top:350.74px;width:100.50px;height:30.06px"><span>D4栋</span></div>
<div class="td" style="left:140.40px;top:350.74px;width:99.90px;height:30.06px"><span>20221003637</span></div>
<div class="td" style="left:240.30px;top:350.74px;width:117.40px;height:30.06px"><span>220715012604</span></div>
<div class="td" style="left:357.70px;top:350.74px;width:100.20px;height:30.06px"><span>8410</span></div>
<div class="td" style="left:457.90px;top:350.74px;width:116.90px;height:30.06px"><span>D4栋-四楼</span></div>
<div class="td" style="left:574.80px;top:350.74px;width:125.70px;height:30.06px"><span>2023-11-01 00:01:21</span></div>
<div class="td" style="left:700.50px;top:350.74px;width:88.10px;height:30.06px"><span>31.82</span></div>
<div class="td" style="left:788.60px;top:350.74px;width:124.70px;height:30.06px"><span>2023-11-14 14:03:32</span></div>
<div class="td" style="left:913.30px;top:350.74px;width:84.90px;height:30.06px"><span>44.75</span></div>
<div class="td" style="left:998.20px;top:350.74px;width:84.20px;height:30.06px"><span>12.93</span></div>
<div class="td" style="left:1082.40px;top:350.74px;width:84.60px;height:30.06px"><span>1</span></div>
<div class="td" style="left:1167.00px;top:350.74px;width:84.40px;height:30.06px"><span>kwh</span></div>
<div class="td" style="left:0.00px;top:380.80px;width:39.90px;height:30.06px"><span>12</span></div>
<div class="td" style="left:39.90px;top:380.80px;width:100.50px;height:30.06px"><span>D4栋</span></div>
<div class="td" style="left:140.40px;top:380.80px;width:99.90px;height:30.06px"><span>20221003637</span></div>
<div class="td" style="left:240.30px;top:380.80px;width:117.40px;height:30.06px"><span>220715012612</span></div>
<div class="td" style="left:357.70px;top:380.80px;width:100.20px;height:30.06px"><span>8408</span></div>
<div class="td" style="left:457.90px;top:380.80px;width:116.90px;height:30.06px"><span>D4栋-四楼</span></div>
<div class="td" style="left:574.80px;top:380.80px;width:125.70px;height:30.06px"><span>2023-11-01 00:01:49</span></div>
<div class="td" style="left:700.50px;top:380.80px;width:88.10px;height:30.06px"><span>730.47</span></div>
<div class="td" style="left:788.60px;top:380.80px;width:124.70px;height:30.06px"><span>2023-11-14 14:01:28</span></div>
<div class="td" style="left:913.30px;top:380.80px;width:84.90px;height:30.06px"><span>799.48</span></div>
<div class="td" style="left:998.20px;top:380.80px;width:84.20px;height:30.06px"><span>69.01</span></div>
<div class="td" style="left:1082.40px;top:380.80px;width:84.60px;height:30.06px"><span>1</span></div>
<div class="td" style="left:1167.00px;top:380.80px;width:84.40px;height:30.06px"><span>kwh</span></div>
<div class="td" style="left:0.00px;top:410.86px;width:39.90px;height:30.06px"><span>13</span></div>
<div class="td" style="left:39.90px;top:410.86px;width:100.50px;height:30.06px"><span>D4栋</span></div>
<div class="td" style="left:140.40px;top:410.86px;width:99.90px;height:30.06px"><span>20221003637</span></div>
<div class="td" style="left:240.30px;top:410.86px;width:117.40px;height:30.06px"><span>220715012626</span></div>
<div class="td" style="left:357.70px;top:410.86px;width:100.20px;height:30.06px"><span>8402</span></div>
<div class="td" style="left:457.90px;top:410.86px;width:116.90px;height:30.06px"><span>D4栋-四楼</span></div>
<div class="td" style="left:574.80px;top:410.86px;width:125.70px;height:30.06px"><span>2023-11-01 00:00:48</span></div>
<div class="td" style="left:700.50px;top:410.86px;width:88.10px;height:30.06px"><span>33.06</span></div>
<div class="td" style="left:788.60px;top:410.86px;width:124.70px;height:30.06px"><span>2023-11-14 14:02:38</span></div>
<div class="td" style="left:913.30px;top:410.86px;width:84.90px;height:30.06px"><span>48.75</span></div>
<div class="td" style="left:998.20px;top:410.86px;width:84.20px;height:30.06px"><span>15.69</span></div>
<div class="td" style="left:1082.40px;top:410.86px;width:84.60px;height:30.06px"><span>1</span></div>
<div class="td" style="left:1167.00px;top:410.86px;width:84.40px;height:30.06px"><span>kwh</span></div>
<div class="td" style="left:0.00px;top:440.92px;width:39.90px;height:30.06px"><span>14</span></div>
<div class="td" style="left:39.90px;top:440.92px;width:100.50px;height:30.06px"><span>D4栋</span></div>
<div class="td" style="left:140.40px;top:440.92px;width:99.90px;height:30.06px"><span>20221003637</span></div>
<div class="td" style="left:240.30px;top:440.92px;width:117.40px;height:30.06px"><span>220715012627</span></div>
<div class="td" style="left:357.70px;top:440.92px;width:100.20px;height:30.06px"><span>8411</span></div>
<div class="td" style="left:457.90px;top:440.92px;width:116.90px;height:30.06px"><span>D4栋-四楼</span></div>
<div class="td" style="left:574.80px;top:440.92px;width:125.70px;height:30.06px"><span>2023-11-01 00:01:24</span></div>
<div class="td" style="left:700.50px;top:440.92px;width:88.10px;height:30.06px"><span>53.59</span></div>
<div class="td" style="left:788.60px;top:440.92px;width:124.70px;height:30.06px"><span>2023-11-14 14:03:35</span></div>
<div class="td" style="left:913.30px;top:440.92px;width:84.90px;height:30.06px"><span>85.14</span></div>
<div class="td" style="left:998.20px;top:440.92px;width:84.20px;height:30.06px"><span>31.55</span></div>
<div class="td" style="left:1082.40px;top:440.92px;width:84.60px;height:30.06px"><span>1</span></div>
<div class="td" style="left:1167.00px;top:440.92px;width:84.40px;height:30.06px"><span>kwh</span></div>
<div class="td" style="left:0.00px;top:470.98px;width:39.90px;height:30.06px"><span>15</span></div>
<div class="td" style="left:39.90px;top:470.98px;width:100.50px;height:30.06px"><span>D4栋</span></div>
<div class="td" style="left:140.40px;top:470.98px;width:99.90px;height:30.06px"><span>20221003637</span></div>
<div class="td" style="left:240.30px;top:470.98px;width:117.40px;height:30.06px"><span>220715012640</span></div>
<div class="td" style="left:357.70px;top:470.98px;width:100.20px;height:30.06px"><span>8417</span></div>
<div class="td" style="left:457.90px;top:470.98px;width:116.90px;height:30.06px"><span>D4栋-四楼</span></div>
<div class="td" style="left:574.80px;top:470.98px;width:125.70px;height:30.06px"><span>2023-11-01 00:01:36</span></div>
<div class="td" style="left:700.50px;top:470.98px;width:88.10px;height:30.06px"><span>1562.62</span></div>
<div class="td" style="left:788.60px;top:470.98px;width:124.70px;height:30.06px"><span>2023-11-14 14:03:48</span></div>
<div class="td" style="left:913.30px;top:470.98px;width:84.90px;height:30.06px"><span>1675.89</span></div>
<div class="td" style="left:998.20px;top:470.98px;width:84.20px;height:30.06px"><span>113.27</span></div>
<div class="td" style="left:1082.40px;top:470.98px;width:84.60px;height:30.06px"><span>1</span></div>
<div class="td" style="left:1167.00px;top:470.98px;width:84.40px;height:30.06px"><span>kwh</span></div>
<div class="a" style="left:0;top:0;width:1258.90px;height:67.10px;background:#f5f7fa"></div>
<div class="th " style="left:0.00px;top:-1.00px;width:39.90px;height:68.10px"><span>序号</span></div>
<div class="th " style="left:39.90px;top:-1.00px;width:100.50px;height:68.10px"><span>标签名称</span></div>
<div class="th " style="left:140.40px;top:-1.00px;width:99.90px;height:68.10px"><span>采集器</span></div>
<div class="th " style="left:240.30px;top:-1.00px;width:117.40px;height:68.10px"><span>电表表号</span></div>
<div class="th " style="left:357.70px;top:-1.00px;width:100.20px;height:68.10px"><span>用户</span></div>
<div class="th " style="left:457.90px;top:-1.00px;width:116.90px;height:68.10px"><span>安装位置</span></div>
<div class="th r1" style="left:574.80px;top:-1.00px;width:213.80px;height:34.90px"><span>正向有功总电能 开始</span></div>
<div class="th r1" style="left:788.60px;top:-1.00px;width:209.60px;height:34.90px"><span>正向有功总电能 结束</span></div>
<div class="th r1" style="left:998.20px;top:-1.00px;width:253.20px;height:34.90px"><span>正向有功总电能 统计结果</span></div>
<div class="th " style="left:574.80px;top:33.90px;width:125.70px;height:33.20px"><span>时间</span></div>
<div class="th " style="left:700.50px;top:33.90px;width:88.10px;height:33.20px"><span>总</span></div>
<div class="th " style="left:788.60px;top:33.90px;width:124.70px;height:33.20px"><span>时间</span></div>
<div class="th " style="left:913.30px;top:33.90px;width:84.90px;height:33.20px"><span>总</span></div>
<div class="th " style="left:998.20px;top:33.90px;width:84.20px;height:33.20px"><span>总(差值)</span></div>
<div class="th " style="left:1082.40px;top:33.90px;width:84.60px;height:33.20px"><span>倍率</span></div>
<div class="th " style="left:1167.00px;top:33.90px;width:84.40px;height:33.20px"><span>单位</span></div>
<div class="th" style="left:1251.40px;top:-1px;width:8.00px;height:34.90px"></div>
<div class="th" style="left:1251.40px;top:33.90px;width:8.00px;height:33.20px"></div>
</div>
<div class="a" style="left:556.1px;top:205px;width:98.6px;height:47.6px;border:2.2px solid #d92d2a;border-radius:3px;z-index:5"></div>
<div class="a" style="left:1582.5px;top:250.3px;width:1px;height:501.5px;background:#ebeef5"></div>
<div class="a" style="left:1575.8px;top:334px;width:6.8px;height:416.5px;background:#69b8fa;border-radius:3.4px 3.4px 0 0"></div>
<div class="a" style="left:1575.8px;top:334px;width:6.8px;height:105px;background:#118af8;border-radius:3.4px 3.4px 0 0;clip-path:polygon(0 0,100% 0,100% 100%,0 95%)"></div>
<div class="a" style="left:1575.8px;top:540px;width:6.8px;height:111px;background:#118af8;clip-path:polygon(0 0,100% 5%,100% 100%,0 95%)"></div>
<span class="a" style="left:1026.2px;top:779.7px;font-size:10.83px;line-height:14px;color:#606266">共 100 条</span>
<div class="inp" style="left:1084.4px;top:774.4px;width:83.1px;height:22.9px;line-height:24px"><span class="a" style="left:15.5px;top:0">15条/页</span><svg class="a" style="left:69px;top:9px;width:7px;height:4px" viewBox="0 0 7 4"><path d="M0.4 0.4L3.5 3.5 6.6 0.4" fill="none" stroke="#c0c4cc" stroke-width="0.8"/></svg></div>
<div class="pg" style="left:1184.6px;color:#c0c4cc"><svg style="position:absolute;left:8.8px;top:7.5px;width:5.5px;height:8px" viewBox="0 0 5.5 8"><path d="M4.6 0.5L1 4l3.6 3.5" fill="none" stroke="#c0c4cc" stroke-width="1.2"/></svg></div>
<div class="pg" style="left:1218.1px;background:#1890ff;color:#fff">1</div>
<div class="pg" style="left:1251.5px">2</div>
<div class="pg" style="left:1285px">3</div>
<div class="pg" style="left:1318.25px">4</div>
<div class="pg" style="left:1351.9px">5</div>
<div class="pg" style="left:1385.3px">6</div>
<div class="pg" style="left:1419px">7</div>
<div class="pg" style="left:1452.25px"><svg style="position:absolute;left:10.2px;top:7.2px;width:5.5px;height:8.5px" viewBox="0 0 5.5 8.5"><path d="M0.8 0.5L4.6 4.25 0.8 8" fill="none" stroke="#404246" stroke-width="1.3"/></svg></div>
<span class="a" style="left:1501.9px;top:779px;font-size:10.83px;line-height:14px;color:#606266">前往</span>
<div class="inp" style="left:1526.5px;top:774.4px;width:37.9px;height:22.9px;line-height:24px;text-align:center">1</div>
<span class="a" style="left:1568.1px;top:779px;font-size:10.83px;line-height:14px;color:#606266">页</span></body></html>
